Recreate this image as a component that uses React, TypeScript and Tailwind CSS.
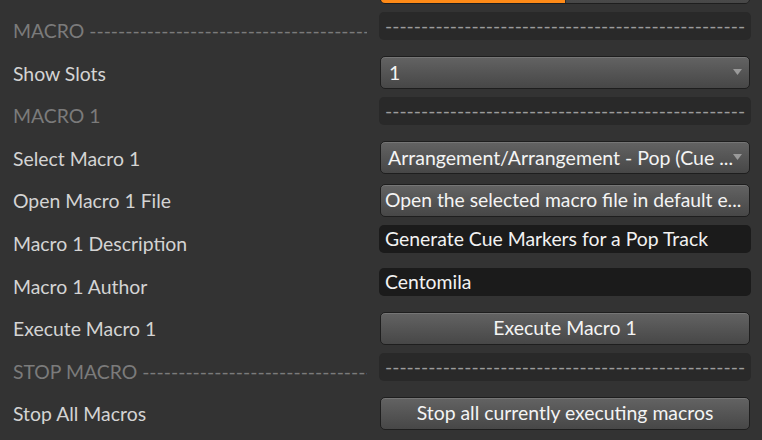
import type { ReactNode } from 'react';

const DASHES = '-'.repeat(70);

const font = { fontFamily: 'Lato, "Noto Sans", sans-serif' };

function Row({ label, header, children }: { label?: string; header?: boolean; children: ReactNode }) {
  return (
    <div className="flex h-[42.6px]">
      <div className="w-[379px] shrink-0 pl-[13px] pr-[12px] pt-[13.5px]">
        {label && (
          <div
            className={`overflow-hidden whitespace-nowrap text-[19.4px] leading-[23px] ${
              header ? 'text-[#7b7b7b]' : 'text-[#d4d4d4]'
            }`}
          >
            {label}
          </div>
        )}
      </div>
      <div className="w-[372px] shrink-0">{children}</div>
    </div>
  );
}

function DashBox() {
  return (
    <div className="mt-[6.5px] flex h-[28px] items-center rounded-[5px] bg-[#292929] px-[6px]">
      <div className="min-w-0 flex-1 overflow-hidden whitespace-nowrap text-[19.4px] leading-[22px] text-[#9c9c9c]">
        {DASHES}
      </div>
    </div>
  );
}

function Field({ value }: { value: string }) {
  return (
    <div className="mt-[6.5px] flex h-[28px] items-center overflow-hidden whitespace-nowrap rounded-[5px] bg-[#1b1b1b] px-[6px] text-[19.4px] leading-[22px] text-[#f2f2f2]">
      {value}
    </div>
  );
}

function Button({ children, center, arrow }: { children: ReactNode; center?: boolean; arrow?: boolean }) {
  return (
    <div
      className={`relative mx-[1px] mt-[8px] flex h-[33px] items-center overflow-hidden whitespace-nowrap rounded-[5px] border border-[#1e1e1e] bg-gradient-to-b from-[#636363] to-[#474747] text-[19.4px] leading-[22px] text-[#f4f4f4] shadow-[inset_0_1px_0_rgba(255,255,255,0.12)] ${
        center ? 'justify-center' : 'pl-[4px]'
      }`}
    >
      {children}
      {arrow && (
        <svg className="absolute right-[7px] top-[12px]" width="9" height="6" viewBox="0 0 9 6">
          <path d="M0 0h9L4.5 6z" fill="#9a9a9a" />
        </svg>
      )}
    </div>
  );
}

export default function App() {
  return (
    <div className="h-[440px] w-[762px] overflow-hidden bg-[#333333]" style={font}>
      <div className="mt-[-37px]">
        <Row>
          <div className="mx-[1px] mt-[8px] flex h-[33px] overflow-hidden rounded-[5px] border border-[#1e1e1e]">
            <div className="w-1/2 bg-[#ff8a17]" />
            <div className="w-1/2 border-l border-[#2a2a2a] bg-gradient-to-b from-[#5d5d5d] to-[#474747]" />
          </div>
        </Row>
        <Row label="MACRO ----------------------------------------------" header>
          <DashBox />
        </Row>
        <Row label="Show Slots">
          <Button arrow>
            <span className="pl-[4px]">1</span>
          </Button>
        </Row>
        <Row label="MACRO 1" header>
          <DashBox />
        </Row>
        <Row label="Select Macro 1">
          <Button arrow>
            <span className="pl-[3px] text-[19.5px]">Arrangement/Arrangement - Pop (Cue ...</span>
          </Button>
        </Row>
        <Row label="Open Macro 1 File">
          <Button>
            <span className="text-[19.3px]">Open the selected macro file in default e...</span>
          </Button>
        </Row>
        <Row label="Macro 1 Description">
          <Field value="Generate Cue Markers for a Pop Track" />
        </Row>
        <Row label="Macro 1 Author">
          <Field value="Centomila" />
        </Row>
        <Row label="Execute Macro 1">
          <Button center>Execute Macro 1</Button>
        </Row>
        <Row label="STOP MACRO ------------------------------------" header>
          <DashBox />
        </Row>
        <Row label="Stop All Macros">
          <Button center>Stop all currently executing macros</Button>
        </Row>
      </div>
    </div>
  );
}
